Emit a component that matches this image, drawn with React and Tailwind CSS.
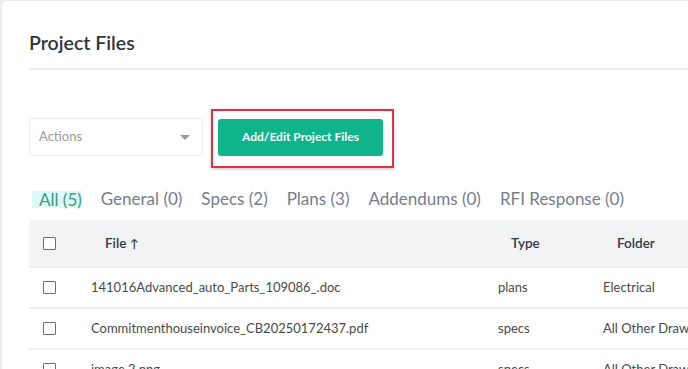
import React from "react";

const rows = [
  { file: "141016Advanced_auto_Parts_109086_.doc", type: "plans", folder: "Electrical" },
  { file: "Commitmenthouseinvoice_CB20250172437.pdf", type: "specs", folder: "All Other Drawings" },
  { file: "image 2.png", type: "specs", folder: "All Other Drawings" },
];

const tabs = ["General (0)", "Specs (2)", "Plans (3)", "Addendums (0)", "RFI Response (0)"];

function Box() {
  return <span className="block w-[13px] h-[13px] border border-[#6f6f6f] rounded-[1px] bg-white" />;
}

export default function App() {
  return (
    <div
      className="w-[688px] h-[369px] overflow-hidden bg-[#ebebeb] pl-[2px] pt-[1px]"
      style={{ fontFamily: "Lato, 'Open Sans', sans-serif" }}
    >
      <div className="w-[900px] h-[400px] bg-white rounded-tl-[5px] pl-[27px]">
        <div className="pt-[28px] h-[67px] text-[19.5px] leading-[28px] font-semibold text-[#2f3542]">
          Project Files
        </div>
        <div className="border-b-2 border-[#ececec]" />

        <div className="mt-[48px] flex items-center gap-[15px]">
          <div className="w-[174px] h-[38px] border border-[#ececec] rounded-[4px] flex items-center justify-between pl-[9px] pr-[12px]">
            <span className="text-[13px] text-[#9a9a9a]">Actions</span>
            <span className="w-0 h-0 border-l-[5px] border-r-[5px] border-t-[5px] border-l-transparent border-r-transparent border-t-[#9a9a9a]" />
          </div>
          <div className="relative">
            <span className="absolute left-[-7px] right-[-11px] top-[-10px] bottom-[-12px] border-2 border-[#e2323f] shadow-[0_1px_3px_rgba(0,0,0,0.25)]" />
            <button className="relative w-[165px] h-[37px] rounded-[3px] bg-[#0fb48b] text-white text-[12px] font-bold">
              Add/Edit Project Files
            </button>
          </div>
        </div>

        <div className="mt-[33px] flex items-center gap-[19px] text-[17px] leading-[20px] pl-[3px]">
          <span className="bg-[#dcf9f5] text-[#3d9b88] pl-[7px] h-[17px] leading-[17px]">All (5)</span>
          {tabs.map((t) => (
            <span key={t} className="text-[#757d8e]">
              {t}
            </span>
          ))}
        </div>

        <div className="mt-[11px] w-[860px]">
          <div className="h-[46px] bg-[#f2f3f5] grid grid-cols-[62px_407px_105px_1fr] items-center text-[13.5px] font-semibold text-[#333a45]">
            <div className="pl-[14px]"><Box /></div>
            <div className="pl-[14px]">File <span className="text-[12px]">↑</span></div>
            <div className="pl-[13px]">Type</div>
            <div className="pl-[14px]">Folder</div>
          </div>
          {rows.map((r) => (
            <div
              key={r.file}
              className="h-[41px] border-t-2 border-[#efefef] grid grid-cols-[62px_407px_105px_1fr] items-center text-[13px] text-[#4a4a4a]"
            >
              <div className="pl-[14px]"><Box /></div>
              <div>{r.file}</div>
              <div>{r.type}</div>
              <div className="whitespace-nowrap">{r.folder}</div>
            </div>
          ))}
        </div>
      </div>
    </div>
  );
}
